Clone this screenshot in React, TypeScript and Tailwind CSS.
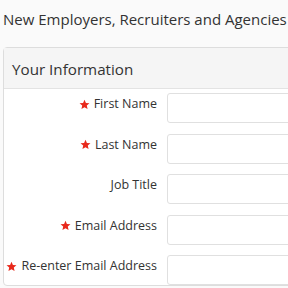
const fields: Array<{ label: string; required: boolean }> = [
  { label: "First Name", required: true },
  { label: "Last Name", required: true },
  { label: "Job Title", required: false },
  { label: "Email Address", required: true },
  { label: "Re-enter Email Address", required: true },
];

function Star() {
  return (
    <svg viewBox="0 0 24 24" className="mr-[4px] inline-block h-[11px] w-[11px] fill-[#e8291c]" aria-hidden>
      <path d="M12 1.5l3.1 7.1 7.7.7-5.8 5.1 1.7 7.6L12 18l-6.7 4 1.7-7.6-5.8-5.1 7.7-.7z" />
    </svg>
  );
}

export default function App() {
  return (
    <div
      className="h-[288px] w-[288px] overflow-hidden bg-[#fafafa] text-[#333]"
      style={{ fontFamily: '"Open Sans", "Liberation Sans", sans-serif' }}
    >
      <h1 className="px-[3px] pt-[8px] text-[15px] leading-[22px] whitespace-nowrap">
        New Employers, Recruiters and Agencies
      </h1>

      <div className="ml-[3px] mt-[17px] w-[400px] rounded-[4px] border border-[#ddd] bg-white">
        <div className="border-b border-[#e3e3e3] bg-[#f5f5f5] px-[8px] pt-[10px] pb-[8px] text-[15.2px] leading-[22px]">
          Your Information
        </div>
        <div className="flex flex-col gap-[10.5px] pt-[4px]">
          {fields.map((f) => (
            <div key={f.label} className="flex items-start gap-[10px]">
              <label className="flex w-[153px] shrink-0 items-center justify-end whitespace-nowrap pt-[2px] text-[12.5px] leading-[18px]">
                {f.required && <Star />}
                {f.label}
              </label>
              <input
                type="text"
                className="h-[30px] w-[200px] rounded-[3px] border border-[#e0e0e0] bg-white"
              />
            </div>
          ))}
        </div>
      </div>
    </div>
  );
}
